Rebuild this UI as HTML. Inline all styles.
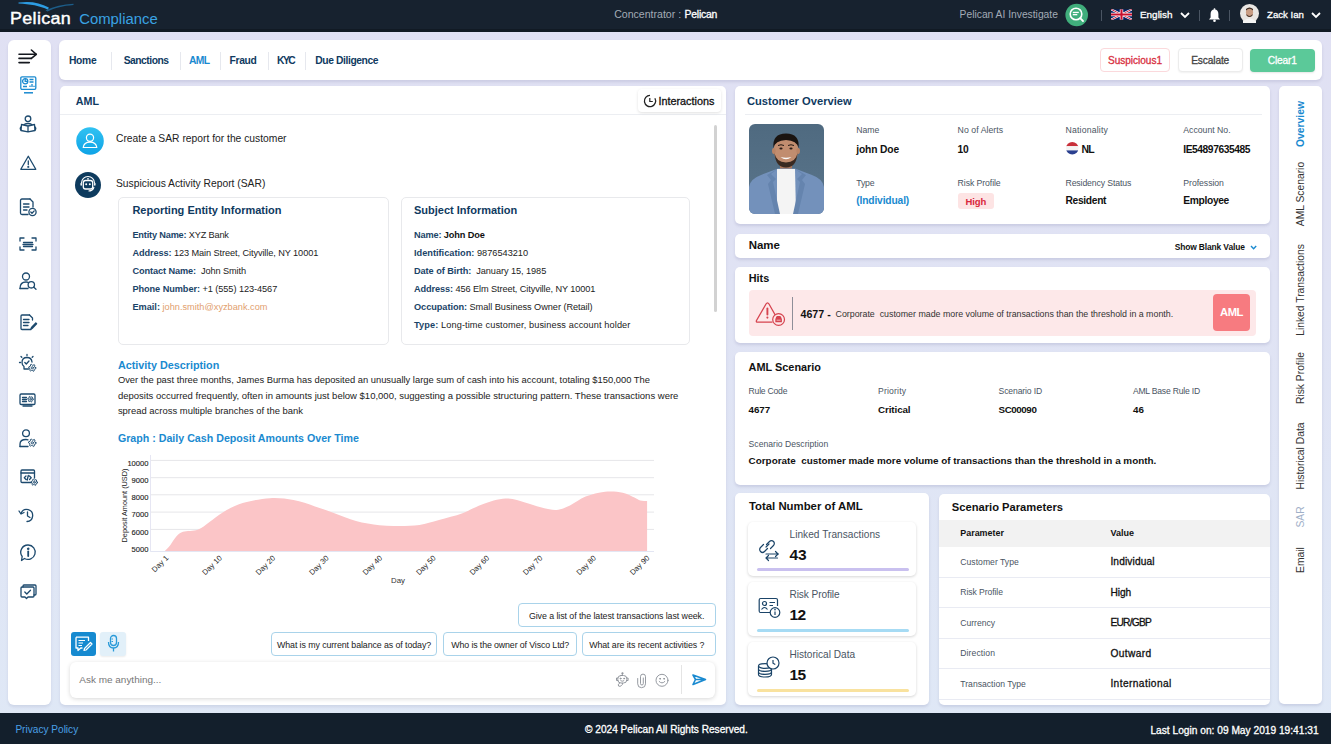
<!DOCTYPE html>
<html><head><meta charset="utf-8"><style>
html,body{margin:0;padding:0;}
body{width:1331px;height:744px;position:relative;overflow:hidden;font-family:"Liberation Sans", sans-serif;background:linear-gradient(180deg,#e0e0f3 0%,#e0e3f4 40%,#dfe8f6 100%);}
.t{position:absolute;line-height:1;white-space:nowrap;}
svg{position:absolute;overflow:visible;}
</style></head><body>
<div style="position:absolute;left:0px;top:0px;width:1331px;height:32px;background:#17222f;"></div>
<div style="position:absolute;left:0px;top:29px;width:1331px;height:3px;background:#111a24;"></div>
<svg style="left:0;top:0" width="100" height="32"><path d="M18.5 2.6 C 30 0.9, 40 2.6, 48.8 7.6 L48 9.8 C 40 5.9, 30 4.1, 18.5 3.6 Z" fill="#2d9de3"/><path d="M45.5 10.2 C 54 6.2, 63 4.3, 73.5 3.7 L73.5 5 C 63 5.9, 55 7.8, 47.5 11.4 Z" fill="#1c5c88"/></svg>
<div class="t" style="left:10px;top:10.76px;font-size:16px;color:#ffffff;font-weight:normal;letter-spacing:0.300px;-webkit-text-stroke:0.4px #fff;transform:scaleX(1.12);transform-origin:0 0;">Pelican</div>
<div class="t" style="left:79.2px;top:11.72px;font-size:14.86px;color:#3aa3e3;font-weight:normal;">Compliance</div>
<div class="t" style="left:614.2px;top:9.45px;font-size:10.57px;color:#a3abb6;font-weight:normal;">Concentrator :</div>
<div class="t" style="left:684.5px;top:9.60px;font-size:10.4px;color:#ffffff;font-weight:normal;-webkit-text-stroke:0.3px currentColor;letter-spacing:-0.199px;">Pelican</div>
<div class="t" style="left:959.6px;top:9.59px;font-size:10.29px;color:#a3abb6;font-weight:normal;">Pelican AI Investigate</div>
<svg style="left:1064px;top:2px" width="26" height="26"><circle cx="12.7" cy="13" r="11.3" fill="#40ae7c"/><circle cx="12" cy="12" r="5.8" fill="none" stroke="#fff" stroke-width="1.6"/><line x1="16.2" y1="16.2" x2="19" y2="19" stroke="#fff" stroke-width="1.8" stroke-linecap="round"/><rect x="8.8" y="9.8" width="6" height="1.3" fill="#fff"/><rect x="8.8" y="12" width="4.5" height="1.3" fill="#fff"/></svg>
<div style="position:absolute;left:1101px;top:10px;width:1px;height:11px;background:#4a5563;"></div>
<div style="position:absolute;left:1199px;top:10px;width:1px;height:11px;background:#4a5563;"></div>
<div style="position:absolute;left:1229px;top:10px;width:1px;height:11px;background:#4a5563;"></div>
<svg style="left:1111px;top:8.5px" width="21" height="11" viewBox="0 0 60 30"><clipPath id="uk"><rect width="60" height="30"/></clipPath><g clip-path="url(#uk)"><rect width="60" height="30" fill="#012169"/><path d="M0,0 L60,30 M60,0 L0,30" stroke="#fff" stroke-width="6"/><path d="M0,0 L60,30 M60,0 L0,30" stroke="#C8102E" stroke-width="2.5"/><path d="M30,0 V30 M0,15 H60" stroke="#fff" stroke-width="10"/><path d="M30,0 V30 M0,15 H60" stroke="#C8102E" stroke-width="6"/></g></svg>
<div class="t" style="left:1140px;top:10.21px;font-size:9.91px;color:#ffffff;font-weight:normal;-webkit-text-stroke:0.3px currentColor;">English</div>
<svg style="left:1180px;top:12px" width="10" height="7"><path d="M1 1 L5 5 L9 1" fill="none" stroke="#fff" stroke-width="1.8"/></svg>
<svg style="left:1208px;top:7.5px" width="13" height="15"><path d="M6.5 1.2 C3.8 1.2 2.6 3.5 2.6 6 L2.6 9.5 L1 11.5 L12 11.5 L10.4 9.5 L10.4 6 C10.4 3.5 9.2 1.2 6.5 1.2 Z" fill="#fff"/><circle cx="6.5" cy="12.8" r="1.3" fill="#fff"/><rect x="5.8" y="0.3" width="1.4" height="1.5" fill="#fff"/></svg>
<svg style="left:1240px;top:4px" width="20" height="20"><circle cx="9.5" cy="9.5" r="9.5" fill="#e9e6e3"/><ellipse cx="9.5" cy="8.2" rx="3.6" ry="4.4" fill="#c99d84"/><path d="M6 6.5 Q9.5 3 13 6.5 L13 5 Q9.5 2 6 5Z" fill="#3a2a22"/><path d="M6.5 10 Q9.5 14 12.5 10 L12.5 11.5 Q9.5 14.5 6.5 11.5Z" fill="#4a3428"/><path d="M3 17 Q9.5 12 16 17 L16 19 L3 19Z" fill="#f4f4f4"/></svg>
<div class="t" style="left:1267px;top:10.43px;font-size:9.65px;color:#ffffff;font-weight:normal;-webkit-text-stroke:0.3px currentColor;">Zack Ian</div>
<svg style="left:1311px;top:12px" width="10" height="7"><path d="M1 1 L5 5 L9 1" fill="none" stroke="#fff" stroke-width="1.8"/></svg>
<div style="position:absolute;left:8px;top:40px;width:43px;height:665px;background:#fff;border-radius:6px;box-shadow:0 2px 3px rgba(50,50,110,0.10);"></div>
<div style="position:absolute;left:59px;top:40px;width:1263px;height:40px;background:#fff;border-radius:6px;box-shadow:0 2px 3px rgba(50,50,110,0.12);"></div>
<div class="t" style="left:69px;top:55.68px;font-size:10.3px;color:#0f3a5f;font-weight:bold;letter-spacing:-0.327px;">Home</div>
<div class="t" style="left:123.7px;top:55.68px;font-size:10.3px;color:#0f3a5f;font-weight:bold;letter-spacing:-0.491px;">Sanctions</div>
<div class="t" style="left:189px;top:55.68px;font-size:10.3px;color:#1a8ad0;font-weight:bold;letter-spacing:-0.671px;">AML</div>
<div class="t" style="left:229.6px;top:55.68px;font-size:10.3px;color:#0f3a5f;font-weight:bold;letter-spacing:-0.382px;">Fraud</div>
<div class="t" style="left:277px;top:55.68px;font-size:10.3px;color:#0f3a5f;font-weight:bold;letter-spacing:-1.550px;">KYC</div>
<div class="t" style="left:315.2px;top:55.68px;font-size:10.3px;color:#0f3a5f;font-weight:bold;letter-spacing:-0.392px;">Due Diligence</div>
<div style="position:absolute;left:110.5px;top:52px;width:1px;height:18px;background:#e6e8ee;"></div>
<div style="position:absolute;left:179.5px;top:52px;width:1px;height:18px;background:#e6e8ee;"></div>
<div style="position:absolute;left:220px;top:52px;width:1px;height:18px;background:#e6e8ee;"></div>
<div style="position:absolute;left:267.5px;top:52px;width:1px;height:18px;background:#e6e8ee;"></div>
<div style="position:absolute;left:305.3px;top:52px;width:1px;height:18px;background:#e6e8ee;"></div>
<div style="position:absolute;left:1100px;top:48px;width:70px;height:24px;box-sizing:border-box;border:1px solid #fbd9dc;border-radius:4px;background:#fff;"></div>
<div class="t" style="left:1108px;top:55.87px;font-size:10.08px;color:#d8303f;font-weight:normal;-webkit-text-stroke:0.3px currentColor;letter-spacing:-0.033px;">Suspicious1</div>
<div style="position:absolute;left:1177.5px;top:48px;width:65px;height:24px;box-sizing:border-box;border:1px solid #ececec;border-radius:4px;background:#fff;box-shadow:0 1px 2px rgba(0,0,0,0.06);"></div>
<div class="t" style="left:1191.2px;top:55.77px;font-size:10.19px;color:#444;font-weight:normal;-webkit-text-stroke:0.3px currentColor;letter-spacing:-0.134px;">Escalate</div>
<div style="position:absolute;left:1250px;top:49px;width:65px;height:23px;border-radius:4px;background:#5bc999;box-shadow:0 1px 2px rgba(0,0,0,0.1);"></div>
<div class="t" style="left:1267.8px;top:55.77px;font-size:10.19px;color:#ffffff;font-weight:normal;-webkit-text-stroke:0.3px currentColor;letter-spacing:-0.168px;">Clear1</div>
<div style="position:absolute;left:0px;top:713px;width:1331px;height:31px;background:#131f2c;"></div>
<div class="t" style="left:15.4px;top:725.44px;font-size:10.11px;color:#4aa0e6;font-weight:normal;">Privacy Policy</div>
<div class="t" style="left:585px;top:725.42px;font-size:10.14px;color:#ffffff;font-weight:normal;-webkit-text-stroke:0.3px currentColor;">&copy; 2024 Pelican All Rights Reserved.</div>
<div class="t" style="left:1150.4px;top:725.57px;font-size:10.2px;color:#ffffff;font-weight:normal;-webkit-text-stroke:0.3px currentColor;">Last Login on: 09 May 2019 19:41:31</div>
<div style="position:absolute;left:60px;top:86px;width:666px;height:619px;background:#fff;border-radius:5px;box-shadow:0 2px 3px rgba(50,50,110,0.10);"></div>
<div class="t" style="left:75.8px;top:95.93px;font-size:10.71px;color:#0f3a5f;font-weight:bold;">AML</div>
<div style="position:absolute;left:60px;top:114px;width:666px;height:1px;background:#eceef2;"></div>
<div style="position:absolute;left:637.5px;top:88.5px;width:83.5px;height:23.5px;box-sizing:border-box;border-radius:4px;background:#fff;box-shadow:0 1px 3px rgba(0,0,0,0.12);"></div>
<svg style="left:642.5px;top:93.5px" width="14" height="14"><path d="M11.9 4.3 A5.6 5.6 0 1 1 7 1.4" fill="none" stroke="#222" stroke-width="1.3"/><path d="M6.8 4 V7.5 H9.8" fill="none" stroke="#222" stroke-width="1.2"/></svg>
<div class="t" style="left:658.4px;top:95.63px;font-size:10.83px;color:#111;font-weight:normal;-webkit-text-stroke:0.3px currentColor;">Interactions</div>
<div style="position:absolute;left:713.8px;top:125px;width:3.4px;height:187px;background:#d2d2d2;border-radius:2px;"></div>
<svg style="left:75.5px;top:127px" width="28" height="28"><defs><linearGradient id="g1" x1="0" y1="0" x2="0" y2="1"><stop offset="0" stop-color="#31c2f2"/><stop offset="1" stop-color="#0ea3e6"/></linearGradient></defs><circle cx="14" cy="14" r="13.8" fill="url(#g1)"/><circle cx="14" cy="10.8" r="3.6" fill="none" stroke="#fff" stroke-width="1.2"/><path d="M7.2 20.5 C7.8 16.2 10.5 15.2 14 15.2 C17.5 15.2 20.2 16.2 20.8 20.5 Z" fill="none" stroke="#fff" stroke-width="1.2" stroke-linejoin="round"/></svg>
<div class="t" style="left:116px;top:134.27px;font-size:10.31px;color:#222;font-weight:normal;">Create a SAR report for the customer</div>
<svg style="left:75px;top:172px" width="26" height="26"><circle cx="13" cy="13" r="13" fill="#0e3b5e"/><rect x="8.3" y="8.5" width="9.4" height="8.5" rx="2.2" fill="none" stroke="#fff" stroke-width="1.3"/><circle cx="11.2" cy="12.2" r="1" fill="#fff"/><circle cx="14.8" cy="12.2" r="1" fill="#fff"/><path d="M6.2 13 L6.2 11.5 M19.8 13 L19.8 11.5" stroke="#fff" stroke-width="1.5" stroke-linecap="round"/><path d="M6.5 11 A6.5 6.5 0 0 1 19.5 11" fill="none" stroke="#fff" stroke-width="1.1"/><path d="M19 15 Q18 19 13.5 19" fill="none" stroke="#fff" stroke-width="1.1"/><circle cx="13" cy="6.8" r="0.9" fill="#fff"/></svg>
<div class="t" style="left:116px;top:179.27px;font-size:10.31px;color:#222;font-weight:normal;">Suspicious Activity Report (SAR)</div>
<div style="position:absolute;left:117.5px;top:196.5px;width:271.5px;height:148px;box-sizing:border-box;border:1px solid #e8e9ec;border-radius:5px;background:#fff;"></div>
<div class="t" style="left:132.4px;top:205.49px;font-size:11.0px;color:#0f3a5f;font-weight:bold;">Reporting Entity Information</div>
<div class="t" style="left:132.4px;top:231.21px;font-size:9.2px;color:#222;font-weight:normal;letter-spacing:-0.176px;"><span style="color:#1b4468;font-weight:bold">Entity Name:</span><span style="color:#222;font-weight:normal"> XYZ Bank</span></div>
<div class="t" style="left:132.4px;top:249.41px;font-size:9.2px;color:#222;font-weight:normal;letter-spacing:-0.089px;"><span style="color:#1b4468;font-weight:bold">Address:</span><span style="color:#222;font-weight:normal"> 123 Main Street, Cityville, NY 10001</span></div>
<div class="t" style="left:132.4px;top:267.41px;font-size:9.2px;color:#222;font-weight:normal;letter-spacing:-0.093px;"><span style="color:#1b4468;font-weight:bold">Contact Name:</span><span style="color:#222;font-weight:normal">&nbsp; John Smith</span></div>
<div class="t" style="left:132.4px;top:285.21px;font-size:9.2px;color:#222;font-weight:normal;letter-spacing:-0.065px;"><span style="color:#1b4468;font-weight:bold">Phone Number:</span><span style="color:#222;font-weight:normal"> +1 (555) 123-4567</span></div>
<div class="t" style="left:132.4px;top:303.21px;font-size:9.2px;color:#222;font-weight:normal;letter-spacing:0.005px;"><span style="color:#1b4468;font-weight:bold">Email:</span><span style="color:#e2a06e;font-weight:normal"> john.smith@xyzbank.com</span></div>
<div style="position:absolute;left:401px;top:197px;width:289px;height:147.5px;box-sizing:border-box;border:1px solid #e8e9ec;border-radius:5px;background:#fff;"></div>
<div class="t" style="left:414px;top:205.49px;font-size:11.0px;color:#0f3a5f;font-weight:bold;">Subject Information</div>
<div class="t" style="left:414px;top:230.81px;font-size:9.2px;color:#222;font-weight:normal;letter-spacing:-0.130px;"><span style="color:#1b4468;font-weight:bold">Name:</span><span style="color:#111;font-weight:bold"> John Doe</span></div>
<div class="t" style="left:414px;top:249.21px;font-size:9.2px;color:#222;font-weight:normal;letter-spacing:0.008px;"><span style="color:#1b4468;font-weight:bold">Identification:</span><span style="color:#222;font-weight:normal"> 9876543210</span></div>
<div class="t" style="left:414px;top:267.21px;font-size:9.2px;color:#222;font-weight:normal;letter-spacing:-0.066px;"><span style="color:#1b4468;font-weight:bold">Date of Birth:</span><span style="color:#222;font-weight:normal">&nbsp; January 15, 1985</span></div>
<div class="t" style="left:414px;top:285.21px;font-size:9.2px;color:#222;font-weight:normal;letter-spacing:-0.100px;"><span style="color:#1b4468;font-weight:bold">Address:</span><span style="color:#222;font-weight:normal"> 456 Elm Street, Cityville, NY 10001</span></div>
<div class="t" style="left:414px;top:303.21px;font-size:9.2px;color:#222;font-weight:normal;letter-spacing:-0.052px;"><span style="color:#1b4468;font-weight:bold">Occupation:</span><span style="color:#222;font-weight:normal"> Small Business Owner (Retail)</span></div>
<div class="t" style="left:414px;top:321.11px;font-size:9.2px;color:#222;font-weight:normal;letter-spacing:0.107px;"><span style="color:#1b4468;font-weight:bold">Type:</span><span style="color:#222;font-weight:normal"> Long-time customer, business account holder</span></div>
<div class="t" style="left:117.9px;top:359.75px;font-size:10.81px;color:#1a8ad0;font-weight:bold;">Activity Description</div>
<div class="t" style="left:117.9px;top:376.27px;font-size:9.37px;color:#222;font-weight:normal;">Over the past three months, James Burma has deposited an unusually large sum of cash into his account, totaling $150,000 The</div>
<div class="t" style="left:117.9px;top:391.26px;font-size:9.5px;color:#222;font-weight:normal;">deposits occurred frequently, often in amounts just below $10,000, suggesting a possible structuring pattern. These transactions were</div>
<div class="t" style="left:117.9px;top:406.00px;font-size:9.45px;color:#222;font-weight:normal;">spread across multiple branches of the bank</div>
<div class="t" style="left:117.9px;top:432.67px;font-size:10.67px;color:#1a8ad0;font-weight:bold;">Graph : Daily Cash Deposit Amounts Over Time</div>
<svg style="left:0;top:0" width="1331" height="744" font-family="Liberation Sans, sans-serif">
<line x1="151" y1="460.4" x2="654" y2="460.4" stroke="#e6e6e9" stroke-width="1"/><line x1="151" y1="477.7" x2="654" y2="477.7" stroke="#e6e6e9" stroke-width="1"/><line x1="151" y1="494.8" x2="654" y2="494.8" stroke="#e6e6e9" stroke-width="1"/><line x1="151" y1="512.1" x2="654" y2="512.1" stroke="#e6e6e9" stroke-width="1"/><line x1="151" y1="529.4" x2="654" y2="529.4" stroke="#e6e6e9" stroke-width="1"/>
<path d="M164.5,551.3 C165.5,550.2 168.4,547.5 170.4,545 C172.4,542.5 174.2,538.8 176.3,536.6 C178.4,534.4 179.4,532.9 183,531.8 C186.6,530.7 193.3,531.4 197.7,529.8 C202.1,528.2 205.3,524.9 209.5,522 C213.7,519.1 217.6,515.4 223.1,512.2 C228.6,509.0 234.9,505.3 242.7,503 C250.5,500.7 261.5,498.7 270,498.2 C278.5,497.7 286.0,498.7 293.5,500.1 C301.0,501.5 308.2,504.2 315,506.4 C321.8,508.6 327.7,510.8 334.5,513.2 C341.3,515.6 348.5,519.0 356,521 C363.5,523.0 372.1,524.5 379.4,525.3 C386.7,526.1 393.3,526.0 400,525.9 C406.7,525.8 413.0,525.9 419.5,524.9 C426.0,523.9 431.8,522.0 439,520 C446.2,518.0 455.3,515.8 462.5,513.2 C469.7,510.6 474.8,506.8 482,504.4 C489.2,502.0 498.3,498.9 505.5,498.6 C512.7,498.3 519.1,501.1 525,502.5 C530.9,503.9 535.5,506.1 540.7,507.3 C545.9,508.5 551.4,510.2 556.3,509.9 C561.2,509.6 565.1,507.6 570,505.4 C574.9,503.2 579.8,498.9 585.6,496.6 C591.5,494.3 598.9,492.4 605.1,491.7 C611.3,491.0 617.8,491.7 622.7,492.7 C627.6,493.7 631.5,496.3 634.4,497.6 C637.3,498.9 638.2,499.9 640.3,500.5 C642.4,501.1 646.0,501.0 647.1,501.1 L647.1,551.3 L164.5,551.3 Z" fill="#fbc5c7"/>
<line x1="150.5" y1="455" x2="150.5" y2="551.8" stroke="#e6e6f3" stroke-width="1"/>
<line x1="150.5" y1="551.5" x2="654" y2="551.5" stroke="#e3e6f3" stroke-width="1"/>
<text x="148.5" y="465.59999999999997" text-anchor="end" font-size="7.6" fill="#222" stroke="#222" stroke-width="0.12">10000</text><text x="148.5" y="482.9" text-anchor="end" font-size="7.6" fill="#222" stroke="#222" stroke-width="0.12">9000</text><text x="148.5" y="500.0" text-anchor="end" font-size="7.6" fill="#222" stroke="#222" stroke-width="0.12">8000</text><text x="148.5" y="517.3000000000001" text-anchor="end" font-size="7.6" fill="#222" stroke="#222" stroke-width="0.12">7000</text><text x="148.5" y="534.6" text-anchor="end" font-size="7.6" fill="#222" stroke="#222" stroke-width="0.12">6000</text><text x="148.5" y="551.9000000000001" text-anchor="end" font-size="7.6" fill="#222" stroke="#222" stroke-width="0.12">5000</text>
<text x="0" y="0" font-size="7.3" fill="#222" text-anchor="middle" transform="translate(127.4 505.5) rotate(-90)">Deposit Amount (USD)</text>
<text x="168.9" y="558.6" text-anchor="end" font-size="7.6" fill="#222" transform="rotate(-45 168.9 558.6)">Day 1</text><text x="222.4" y="558.6" text-anchor="end" font-size="7.6" fill="#222" transform="rotate(-45 222.4 558.6)">Day 10</text><text x="275.8" y="558.6" text-anchor="end" font-size="7.6" fill="#222" transform="rotate(-45 275.8 558.6)">Day 20</text><text x="329.3" y="558.6" text-anchor="end" font-size="7.6" fill="#222" transform="rotate(-45 329.3 558.6)">Day 30</text><text x="382.7" y="558.6" text-anchor="end" font-size="7.6" fill="#222" transform="rotate(-45 382.7 558.6)">Day 40</text><text x="436.2" y="558.6" text-anchor="end" font-size="7.6" fill="#222" transform="rotate(-45 436.2 558.6)">Day 50</text><text x="489.7" y="558.6" text-anchor="end" font-size="7.6" fill="#222" transform="rotate(-45 489.7 558.6)">Day 60</text><text x="543.1" y="558.6" text-anchor="end" font-size="7.6" fill="#222" transform="rotate(-45 543.1 558.6)">Day 70</text><text x="596.6" y="558.6" text-anchor="end" font-size="7.6" fill="#222" transform="rotate(-45 596.6 558.6)">Day 80</text><text x="650.0" y="558.6" text-anchor="end" font-size="7.6" fill="#222" transform="rotate(-45 650.0 558.6)">Day 90</text>
<text x="398" y="583" font-size="7.8" fill="#333" text-anchor="middle">Day</text>
</svg>
<div style="position:absolute;left:518.4px;top:603.4px;width:197.2px;height:24px;box-sizing:border-box;border:1px solid #a9d3ea;border-radius:4px;background:#fff;"></div>
<div class="t" style="left:528.9px;top:611.83px;font-size:8.83px;color:#222;font-weight:normal;letter-spacing:-0.065px;">Give a list of the latest transactions last week.</div>
<div style="position:absolute;left:271.2px;top:632.2px;width:166.2px;height:23.5px;box-sizing:border-box;border:1px solid #a9d3ea;border-radius:4px;background:#fff;"></div>
<div class="t" style="left:277px;top:640.63px;font-size:8.83px;color:#222;font-weight:normal;letter-spacing:-0.089px;">What is my current balance as of today?</div>
<div style="position:absolute;left:442.6px;top:632.2px;width:134.7px;height:23.5px;box-sizing:border-box;border:1px solid #a9d3ea;border-radius:4px;background:#fff;"></div>
<div class="t" style="left:451.3px;top:640.63px;font-size:8.83px;color:#222;font-weight:normal;letter-spacing:-0.127px;">Who is the owner of Visco Ltd?</div>
<div style="position:absolute;left:581.6px;top:632.2px;width:134px;height:23.5px;box-sizing:border-box;border:1px solid #a9d3ea;border-radius:4px;background:#fff;"></div>
<div class="t" style="left:589.2px;top:640.63px;font-size:8.83px;color:#222;font-weight:normal;letter-spacing:-0.082px;">What are its recent activities ?</div>
<div style="position:absolute;left:70.6px;top:631.7px;width:25.5px;height:24px;background:#168ad0;border-radius:3px;"></div>
<svg style="left:74px;top:635px" width="19" height="17"><path d="M2 2.2 H14.5 V6 M2 2.2 V13 H4 V15.5 L6.8 13 H8.5" fill="none" stroke="#fff" stroke-width="1.3" stroke-linejoin="round"/><path d="M4.5 5.5 H11 M4.5 8 H9 M4.5 10.5 H8" stroke="#fff" stroke-width="1.2"/><path d="M10.5 13.5 L16.5 7.5 L18 9 L12 15 L10 15.5 Z" fill="none" stroke="#fff" stroke-width="1.2" stroke-linejoin="round"/></svg>
<div style="position:absolute;left:100.4px;top:631.7px;width:26px;height:24px;background:#e2f0f9;border-radius:3px;box-shadow:0 1px 2px rgba(0,0,0,0.08);"></div>
<svg style="left:106px;top:634px" width="15" height="19"><rect x="4.5" y="1.5" width="6" height="10" rx="3" fill="none" stroke="#2a9ad8" stroke-width="1.3"/><path d="M2.5 8 Q2.5 14 7.5 14 Q12.5 14 12.5 8" fill="none" stroke="#2a9ad8" stroke-width="1.3"/><path d="M7.5 14 V17.5" stroke="#2a9ad8" stroke-width="1.3"/><path d="M5.5 5 H7 M5.5 7.5 H7" stroke="#2a9ad8" stroke-width="1"/></svg>
<div style="position:absolute;left:70.2px;top:661.8px;width:645px;height:36.5px;background:#fff;border-radius:6px;box-shadow:0 1px 4px rgba(0,0,0,0.16);"></div>
<div class="t" style="left:79.3px;top:675.26px;font-size:9.97px;color:#777;font-weight:normal;">Ask me anything...</div>
<div style="position:absolute;left:680.5px;top:665px;width:1px;height:29px;background:#e4e4e4;"></div>
<svg style="left:615px;top:671px" width="56" height="18"><g fill="none" stroke="#8a8f96" stroke-width="0.9" stroke-linecap="round"><rect x="2.8" y="4.5" width="9" height="7.5" rx="3.2"/><path d="M2.8 7 H1.5 V9.5 H2.8 M11.8 7 H13.1 V9.5 H11.8"/><path d="M7.3 4.5 V2.8"/><circle cx="7.3" cy="2.2" r="0.6"/><circle cx="5.5" cy="7.6" r="0.5"/><circle cx="9.1" cy="7.6" r="0.5"/><path d="M5.8 9.8 Q7.3 10.8 8.8 9.8"/><path d="M4.5 12.3 Q2.5 13 3.5 15 Q5 16 6.5 14.5 Q8 13.5 7.5 12.3"/><path d="M28.3 7 V12.6 A1.4 1.4 0 0 1 25.5 12.6 V5.6 A2.5 2.5 0 0 1 30.5 5.6 V12.8 A3.9 3.9 0 0 1 22.7 12.8 V7.5"/><circle cx="47" cy="9.3" r="6"/><path d="M44.2 10.5 Q47 13.5 49.8 10.5"/><circle cx="45" cy="7.8" r="0.45"/><circle cx="49" cy="7.8" r="0.45"/></g></svg>
<svg style="left:692px;top:674px" width="15" height="12"><path d="M1 1 L13.5 5.5 L1 10.5 L3.5 5.5 Z M3.5 5.5 H13" fill="none" stroke="#1a8ad0" stroke-width="1.6" stroke-linejoin="round"/></svg>
<div style="position:absolute;left:735px;top:86.3px;width:535px;height:138px;background:#fff;border-radius:5px;box-shadow:0 2px 3px rgba(50,50,110,0.13);"></div>
<div class="t" style="left:746.9px;top:95.75px;font-size:11.16px;color:#0f3a5f;font-weight:bold;">Customer Overview</div>
<div style="position:absolute;left:744.5px;top:114px;width:517px;height:1px;background:#eceef2;"></div>
<svg style="left:749.2px;top:124.4px" width="75" height="90"><defs><clipPath id="ph"><rect width="75" height="90" rx="6"/></clipPath>
<linearGradient id="bg" x1="0" y1="0" x2="0" y2="1"><stop offset="0" stop-color="#4f6a80"/><stop offset="1" stop-color="#5a758b"/></linearGradient></defs>
<g clip-path="url(#ph)">
<rect width="75" height="90" fill="url(#bg)"/>
<rect x="31" y="34" width="12" height="16" fill="#a9765b"/>
<path d="M0 90 L0 63 Q1 55 12 51 L29 44.5 L46 44.5 L63 51 Q74 55 75 63 L75 90 Z" fill="#7391bb"/>
<path d="M28 45 L46 45 L47 90 L28 90 Z" fill="#f4f4f4"/>
<path d="M29 44.5 L22 50 L27 55 L24 58 L31 90 L26 90 L19 60 L22 56 L18 51 Z" fill="#6584ae"/>
<path d="M45.5 44.5 L53 50 L48 55 L51 58 L44 90 L49 90 L56 60 L53 56 L57 51 Z" fill="#6584ae"/>
<ellipse cx="37" cy="26" rx="12.2" ry="15" fill="#c18d6f"/>
<ellipse cx="24.8" cy="27" rx="1.8" ry="3" fill="#b98466"/><ellipse cx="49.2" cy="27" rx="1.8" ry="3" fill="#b98466"/>
<path d="M24.5 24 Q23 9.5 37 9.5 Q51 9.5 49.5 24 Q48 16.5 37 16 Q26 16.5 24.5 24 Z" fill="#1a1411"/>
<path d="M25.5 29 Q26.5 43.5 37 43.5 Q47.5 43.5 48.5 29 Q47 38 37 38.5 Q27 38 25.5 29 Z" fill="#3a2a21"/>
<path d="M31.5 33 Q37 37.5 42.5 33 Q37 34.5 31.5 33 Z" fill="#fafafa"/>
<ellipse cx="32" cy="24.5" rx="1.6" ry="0.9" fill="#2a1d17"/><ellipse cx="42" cy="24.5" rx="1.6" ry="0.9" fill="#2a1d17"/>
<path d="M29 21.5 Q32 20 35 21.5 M39 21.5 Q42 20 45 21.5" stroke="#241a15" stroke-width="1" fill="none"/>
</g></svg>
<div class="t" style="left:856.2px;top:126.24px;font-size:8.7px;color:#4a5563;font-weight:normal;letter-spacing:-0.047px;">Name</div>
<div class="t" style="left:856.2px;top:145.21px;font-size:10.26px;color:#111;font-weight:bold;letter-spacing:-0.135px;">john Doe</div>
<div class="t" style="left:957.6px;top:126.24px;font-size:8.7px;color:#4a5563;font-weight:normal;letter-spacing:0.058px;">No of Alerts</div>
<div class="t" style="left:957.6px;top:145.21px;font-size:10.26px;color:#111;font-weight:bold;letter-spacing:-0.407px;">10</div>
<div class="t" style="left:1065.5px;top:126.24px;font-size:8.7px;color:#4a5563;font-weight:normal;letter-spacing:0.185px;">Nationality</div>
<svg style="left:1065.5px;top:142.2px" width="13" height="13"><clipPath id="nl"><circle cx="6.25" cy="6.25" r="6.2"/></clipPath><g clip-path="url(#nl)"><rect width="13" height="4.2" fill="#c8303a"/><rect y="4.2" width="13" height="4.2" fill="#f4f4f4"/><rect y="8.4" width="13" height="4.6" fill="#2a3f8f"/></g></svg>
<div class="t" style="left:1081.6px;top:145.03px;font-size:10.48px;color:#111;font-weight:bold;letter-spacing:-0.787px;">NL</div>
<div class="t" style="left:1183.3px;top:126.24px;font-size:8.7px;color:#4a5563;font-weight:normal;letter-spacing:-0.003px;">Account No.</div>
<div class="t" style="left:1183.3px;top:145.21px;font-size:10.26px;color:#111;font-weight:bold;letter-spacing:-0.442px;">IE54897635485</div>
<div class="t" style="left:856.2px;top:178.54px;font-size:8.7px;color:#4a5563;font-weight:normal;letter-spacing:-0.136px;">Type</div>
<div class="t" style="left:856.2px;top:196.41px;font-size:10.26px;color:#1a8ad0;font-weight:bold;letter-spacing:-0.143px;">(Individual)</div>
<div class="t" style="left:957.6px;top:178.54px;font-size:8.7px;color:#4a5563;font-weight:normal;letter-spacing:-0.078px;">Risk Profile</div>
<div style="position:absolute;left:957.6px;top:193.4px;width:36.5px;height:15.5px;background:#fde4e4;border-radius:3px;"></div>
<div class="t" style="left:965.5px;top:197.06px;font-size:9.5px;color:#d9273b;font-weight:bold;letter-spacing:-0.080px;">High</div>
<div class="t" style="left:1065.5px;top:178.54px;font-size:8.7px;color:#4a5563;font-weight:normal;letter-spacing:-0.119px;">Residency Status</div>
<div class="t" style="left:1065.5px;top:196.41px;font-size:10.26px;color:#111;font-weight:bold;letter-spacing:-0.329px;">Resident</div>
<div class="t" style="left:1183.3px;top:178.54px;font-size:8.7px;color:#4a5563;font-weight:normal;letter-spacing:-0.045px;">Profession</div>
<div class="t" style="left:1183.3px;top:196.41px;font-size:10.26px;color:#111;font-weight:bold;letter-spacing:-0.346px;">Employee</div>
<div style="position:absolute;left:735px;top:234px;width:535px;height:24.4px;background:#fff;border-radius:5px;box-shadow:0 2px 3px rgba(50,50,110,0.13);"></div>
<div class="t" style="left:748.7px;top:239.57px;font-size:11.49px;color:#111;font-weight:bold;">Name</div>
<div class="t" style="left:1174.7px;top:243.15px;font-size:8.45px;color:#111;font-weight:bold;letter-spacing:-0.135px;">Show Blank Value</div>
<svg style="left:1249.5px;top:244.5px" width="8" height="6"><path d="M1 1 L3.6 3.8 L6.2 1" fill="none" stroke="#1a8ad0" stroke-width="1.4"/></svg>
<div style="position:absolute;left:735px;top:267.4px;width:535px;height:76px;background:#fff;border-radius:5px;box-shadow:0 2px 3px rgba(50,50,110,0.13);"></div>
<div class="t" style="left:748.7px;top:273.32px;font-size:10.85px;color:#111;font-weight:bold;letter-spacing:0.000px;">Hits</div>
<div style="position:absolute;left:749.2px;top:290.4px;width:506.5px;height:45.5px;background:#fde8e9;border-radius:4px;"></div>
<svg style="left:755px;top:300px" width="32" height="26"><path d="M20.5 15.5 L14 4 Q12.5 1.6 11 4 L1.5 20.5 Q0.8 22.2 2.7 22.2 L17.5 22.2" fill="none" stroke="#d6434f" stroke-width="1.3" stroke-linejoin="round"/><path d="M12.4 8.5 V14.5" stroke="#d6434f" stroke-width="1.9" stroke-linecap="round"/><circle cx="12.4" cy="17.6" r="1.05" fill="#d6434f"/><circle cx="23.6" cy="19.5" r="5.9" fill="#fde8e9" stroke="#d6434f" stroke-width="1.2"/><path d="M20.3 19.2 L21.2 16.8 Q21.5 16 22.4 16 H24.8 Q25.7 16 26 16.8 L26.9 19.2 V22.2 H20.3 Z" fill="#d6434f"/><path d="M21.6 20.2 H25.6" stroke="#fde8e9" stroke-width="0.7"/></svg>
<div style="position:absolute;left:792px;top:297px;width:1px;height:33px;background:#8e8e98;"></div>
<div class="t" style="left:800.5px;top:308.88px;font-size:10.66px;color:#111;font-weight:bold;">4677 -</div>
<div class="t" style="left:835.5px;top:309.93px;font-size:8.83px;color:#333;font-weight:normal;">Corporate&nbsp; customer made more volume of transactions than the threshold in a month.</div>
<div style="position:absolute;left:1212.7px;top:294.4px;width:37.8px;height:37px;background:#f77b80;border-radius:4px;"></div>
<div class="t" style="left:1220px;top:307.08px;font-size:11.25px;color:#ffffff;font-weight:bold;letter-spacing:-0.457px;">AML</div>
<div style="position:absolute;left:735px;top:352.4px;width:535px;height:133px;background:#fff;border-radius:5px;box-shadow:0 2px 3px rgba(50,50,110,0.13);"></div>
<div class="t" style="left:748.6px;top:361.97px;font-size:10.9px;color:#111;font-weight:bold;">AML Scenario</div>
<div class="t" style="left:748.6px;top:387.32px;font-size:8.6px;color:#4a5563;font-weight:normal;letter-spacing:-0.223px;">Rule Code</div>
<div class="t" style="left:748.6px;top:405.30px;font-size:9.8px;color:#111;font-weight:bold;letter-spacing:-0.074px;">4677</div>
<div class="t" style="left:878px;top:387.32px;font-size:8.6px;color:#4a5563;font-weight:normal;letter-spacing:0.181px;">Priority</div>
<div class="t" style="left:878px;top:405.30px;font-size:9.8px;color:#111;font-weight:bold;letter-spacing:-0.090px;">Critical</div>
<div class="t" style="left:998.6px;top:387.32px;font-size:8.6px;color:#4a5563;font-weight:normal;letter-spacing:-0.137px;">Scenario ID</div>
<div class="t" style="left:998.6px;top:405.30px;font-size:9.8px;color:#111;font-weight:bold;letter-spacing:-0.437px;">SC00090</div>
<div class="t" style="left:1132.9px;top:387.32px;font-size:8.6px;color:#4a5563;font-weight:normal;letter-spacing:-0.211px;">AML Base Rule ID</div>
<div class="t" style="left:1132.9px;top:405.30px;font-size:9.8px;color:#111;font-weight:bold;letter-spacing:0.047px;">46</div>
<div class="t" style="left:748.6px;top:439.52px;font-size:8.6px;color:#4a5563;font-weight:normal;letter-spacing:0.015px;">Scenario Description</div>
<div class="t" style="left:748.6px;top:456.43px;font-size:9.89px;color:#111;font-weight:bold;letter-spacing:0.000px;">Corporate&nbsp; customer made more volume of transactions than the threshold in a month.</div>
<div style="position:absolute;left:734.6px;top:492.6px;width:194.4px;height:212.8px;background:#fff;border-radius:5px;box-shadow:0 2px 3px rgba(50,50,110,0.13);"></div>
<div class="t" style="left:748.9px;top:501.36px;font-size:11.39px;color:#111;font-weight:bold;">Total Number of AML</div>
<div style="position:absolute;left:747.7px;top:521.6px;width:168.5px;height:54px;background:#fff;border-radius:5px;box-shadow:0 1px 3px rgba(0,0,0,0.17);"></div>
<div class="t" style="left:789.5px;top:529.85px;font-size:10.1px;color:#4a5563;font-weight:normal;letter-spacing:0.048px;">Linked Transactions</div>
<div class="t" style="left:789.5px;top:546.66px;font-size:15.52px;color:#111;font-weight:bold;letter-spacing:-0.231px;">43</div>
<div style="position:absolute;left:756.9px;top:568.1px;width:151.7px;height:3.2px;background:#c9c0ef;border-radius:2px;"></div>
<div style="position:absolute;left:747.7px;top:582px;width:168.5px;height:54px;background:#fff;border-radius:5px;box-shadow:0 1px 3px rgba(0,0,0,0.17);"></div>
<div class="t" style="left:789.5px;top:590.25px;font-size:10.1px;color:#4a5563;font-weight:normal;letter-spacing:-0.087px;">Risk Profile</div>
<div class="t" style="left:789.5px;top:607.06px;font-size:15.52px;color:#111;font-weight:bold;letter-spacing:-0.681px;">12</div>
<div style="position:absolute;left:756.9px;top:628.5px;width:151.7px;height:3.2px;background:#a6dbf4;border-radius:2px;"></div>
<div style="position:absolute;left:747.7px;top:642.2px;width:168.5px;height:54px;background:#fff;border-radius:5px;box-shadow:0 1px 3px rgba(0,0,0,0.17);"></div>
<div class="t" style="left:789.5px;top:650.45px;font-size:10.1px;color:#4a5563;font-weight:normal;letter-spacing:-0.003px;">Historical Data</div>
<div class="t" style="left:789.5px;top:667.26px;font-size:15.52px;color:#111;font-weight:bold;letter-spacing:-0.681px;">15</div>
<div style="position:absolute;left:756.9px;top:688.7px;width:151.7px;height:3.2px;background:#f9e29e;border-radius:2px;"></div>
<svg style="left:757px;top:535px" width="24" height="28"><g fill="none" stroke="#1b4468" stroke-width="1.2" stroke-linecap="round"><path d="M9.5 9.5 L12.5 6.5 A2.8 2.8 0 0 1 16.5 10.5 L13.5 13.5"/><path d="M10.5 13.5 L7.5 16.5 A2.8 2.8 0 0 1 3.5 12.5 L6.5 9.5"/><path d="M9 12 L12 9"/><path d="M9 19 H21 M18.5 16.5 L21 19 M9 23 H20.5 M11.5 20.5 L9 23 L11.5 25.5"/><path d="M18.5 21.5 L21 19"/></g></svg>
<svg style="left:758px;top:597px" width="24" height="24"><g fill="none" stroke="#1b4468" stroke-width="1.2"><path d="M15 15.5 H2.5 Q1.2 15.5 1.2 14 V3 Q1.2 1.5 2.5 1.5 H18 Q19.5 1.5 19.5 3 V9"/><circle cx="6.5" cy="6.5" r="2"/><path d="M3.5 12.5 Q6.5 8.5 9.5 12.5"/><path d="M11.5 5.5 H17 M11.5 8.5 H15"/><circle cx="17" cy="15.5" r="4.8" fill="#fff"/><path d="M17 14.5 V18"/><circle cx="17" cy="12.6" r="0.3" fill="#1b4468"/></g></svg>
<svg style="left:756px;top:655px" width="26" height="26"><g fill="none" stroke="#1b4468" stroke-width="1.2"><ellipse cx="9" cy="11" rx="6.5" ry="2.3"/><path d="M2.5 11 V19.5 Q2.5 22 9 22 Q15.5 22 15.5 19.5 V11"/><path d="M2.5 14 Q2.5 16.3 9 16.3 Q15.5 16.3 15.5 14 M2.5 17 Q2.5 19.3 9 19.3 Q15.5 19.3 15.5 17"/><circle cx="17" cy="8" r="6" fill="#fff"/><path d="M17 5 V8.2 L19.3 9.5"/></g></svg>
<div style="position:absolute;left:938.7px;top:494.2px;width:331.3px;height:211px;background:#fff;border-radius:5px;box-shadow:0 2px 3px rgba(50,50,110,0.13);overflow:hidden;"></div>
<div class="t" style="left:951.8px;top:501.54px;font-size:11.18px;color:#111;font-weight:bold;">Scenario Parameters</div>
<div style="position:absolute;left:938.7px;top:520px;width:331.3px;height:27px;background:#f2f2f2;"></div>
<div class="t" style="left:960.3px;top:529.36px;font-size:8.91px;color:#111;font-weight:bold;">Parameter</div>
<div class="t" style="left:1110.4px;top:529.28px;font-size:9.0px;color:#111;font-weight:bold;">Value</div>
<div class="t" style="left:960.3px;top:557.62px;font-size:8.6px;color:#4a5563;font-weight:normal;letter-spacing:0.029px;">Customer Type</div>
<div class="t" style="left:1110.4px;top:557.07px;font-size:10.2px;color:#111;font-weight:normal;-webkit-text-stroke:0.3px currentColor;letter-spacing:0.125px;">Individual</div>
<div style="position:absolute;left:938.7px;top:576.5px;width:331.3px;height:1px;background:#e9ebf3;"></div>
<div class="t" style="left:960.3px;top:588.12px;font-size:8.6px;color:#4a5563;font-weight:normal;letter-spacing:-0.072px;">Risk Profile</div>
<div class="t" style="left:1110.4px;top:587.57px;font-size:10.2px;color:#111;font-weight:normal;-webkit-text-stroke:0.3px currentColor;letter-spacing:-0.063px;">High</div>
<div style="position:absolute;left:938.7px;top:607.0px;width:331.3px;height:1px;background:#e9ebf3;"></div>
<div class="t" style="left:960.3px;top:618.62px;font-size:8.6px;color:#4a5563;font-weight:normal;letter-spacing:-0.009px;">Currency</div>
<div class="t" style="left:1110.4px;top:618.07px;font-size:10.2px;color:#111;font-weight:normal;-webkit-text-stroke:0.3px currentColor;letter-spacing:-0.751px;">EUR/GBP</div>
<div style="position:absolute;left:938.7px;top:637.5px;width:331.3px;height:1px;background:#e9ebf3;"></div>
<div class="t" style="left:960.3px;top:649.12px;font-size:8.6px;color:#4a5563;font-weight:normal;letter-spacing:0.098px;">Direction</div>
<div class="t" style="left:1110.4px;top:648.57px;font-size:10.2px;color:#111;font-weight:normal;-webkit-text-stroke:0.3px currentColor;letter-spacing:0.383px;">Outward</div>
<div style="position:absolute;left:938.7px;top:668.0px;width:331.3px;height:1px;background:#e9ebf3;"></div>
<div class="t" style="left:960.3px;top:679.62px;font-size:8.6px;color:#4a5563;font-weight:normal;letter-spacing:0.009px;">Transaction Type</div>
<div class="t" style="left:1110.4px;top:679.07px;font-size:10.2px;color:#111;font-weight:normal;-webkit-text-stroke:0.3px currentColor;letter-spacing:0.402px;">International</div>
<div style="position:absolute;left:938.7px;top:698.5px;width:331.3px;height:1px;background:#e9ebf3;"></div>
<div style="position:absolute;left:1279px;top:86.3px;width:42.7px;height:617.5px;background:#fff;border-radius:5px;box-shadow:0 2px 3px rgba(50,50,110,0.13);"></div>
<div class="t" style="left:1241.2px;top:118.3px;width:120px;height:12px;line-height:12px;text-align:center;font-size:10.3px;color:#1a8ad0;font-weight:bold;transform:rotate(-90deg);">Overview</div>
<div class="t" style="left:1241.2px;top:188.39999999999998px;width:120px;height:12px;line-height:12px;text-align:center;font-size:10.3px;color:#333;font-weight:normal;transform:rotate(-90deg);">AML Scenario</div>
<div class="t" style="left:1241.2px;top:284.3px;width:120px;height:12px;line-height:12px;text-align:center;font-size:10.3px;color:#333;font-weight:normal;transform:rotate(-90deg);">Linked Transactions</div>
<div class="t" style="left:1241.2px;top:371.75px;width:120px;height:12px;line-height:12px;text-align:center;font-size:10.3px;color:#333;font-weight:normal;transform:rotate(-90deg);">Risk Profile</div>
<div class="t" style="left:1241.2px;top:449.85px;width:120px;height:12px;line-height:12px;text-align:center;font-size:10.3px;color:#333;font-weight:normal;transform:rotate(-90deg);">Historical Data</div>
<div class="t" style="left:1241.2px;top:511.25px;width:120px;height:12px;line-height:12px;text-align:center;font-size:10.3px;color:#9fb0c8;font-weight:normal;transform:rotate(-90deg);">SAR</div>
<div class="t" style="left:1241.2px;top:553.5999999999999px;width:120px;height:12px;line-height:12px;text-align:center;font-size:10.3px;color:#333;font-weight:normal;transform:rotate(-90deg);">Email</div>
<svg style="left:0;top:0" width="50" height="70"><g fill="none" stroke="#15181f" stroke-width="1.6" stroke-linecap="round" stroke-linejoin="round"><path d="M19 54.3 H36.2 M19 58.4 H31.2 M19 62.6 H29.3"/><path d="M31.4 50 L36.3 54.3 L31.4 58.4"/></g></svg>
<svg style="left:20px;top:75.5px" width="17" height="18"><g fill="none" stroke="#1a8ad0" stroke-width="1.3"><rect x="0.8" y="0.8" width="15" height="12.5" rx="1.2"/><circle cx="5.2" cy="5.3" r="2.6"/><path d="M5.2 2.7 V5.3 H7.8"/><path d="M9.5 3.5 H13.5 M9.5 6 H13.5 M3 10.5 H7"/><path d="M10 11 V9.5 M12 11 V8 M14 11 V9.8"/><path d="M4 16.8 H13" stroke-width="1.5"/></g></svg>
<svg style="left:19px;top:114.5px" width="18" height="18"><g fill="none" stroke="#1d4a6e" stroke-width="1.3" stroke-linecap="round" stroke-linejoin="round"><circle cx="9" cy="3.8" r="2.8"/><path d="M5 9.5 Q9 7.5 13 9.5"/><path d="M9 11 V16.5 M2.5 9.5 L9 11 L15.5 9.5 L16 15.5 L9 16.8 L2 15.5 Z"/><path d="M2 12 Q0.5 13.5 2 15 M16 12 Q17.5 13.5 16 15"/></g></svg>
<svg style="left:19.5px;top:155px" width="17" height="16"><g fill="none" stroke="#1d4a6e" stroke-width="1.3" stroke-linecap="round" stroke-linejoin="round"><path d="M8.3 1.2 L15.8 14.3 H0.8 Z"/><path d="M8.3 6 V9.5"/><circle cx="8.3" cy="11.9" r="0.4"/></g></svg>
<svg style="left:18.5px;top:198px" width="19" height="19"><g fill="none" stroke="#1d4a6e" stroke-width="1.3" stroke-linecap="round" stroke-linejoin="round"><path d="M11 1 H3 Q1.5 1 1.5 2.5 V15 Q1.5 16.5 3 16.5 H9"/><path d="M11 1 L14 4 V9"/><path d="M4.5 6 H10 M4.5 9 H10 M4.5 12 H8"/><circle cx="13.5" cy="14" r="3.6"/><path d="M11.8 14 L13 15.2 L15.2 12.9"/></g></svg>
<svg style="left:18.5px;top:236.5px" width="18" height="15"><g fill="none" stroke="#1d4a6e" stroke-width="1.3" stroke-linecap="round" stroke-linejoin="round"><path d="M1 4 V1 H5 M13 1 H17 V4 M17 10 V13 H13 M5 13 H1 V10"/><path d="M4.5 5.5 H13.5 M4 7.5 H14 M4.5 9.5 H13.5"/></g></svg>
<svg style="left:19px;top:272px" width="18" height="18"><g fill="none" stroke="#1d4a6e" stroke-width="1.3" stroke-linecap="round" stroke-linejoin="round"><circle cx="7" cy="4.5" r="3.5"/><path d="M1 16.5 Q1 10 7 10 Q8.5 10 9.5 10.5"/><path d="M1 16.5 H9"/><circle cx="12.3" cy="12.8" r="3.2"/><path d="M14.6 15.1 L17 17.2"/></g></svg>
<svg style="left:19.5px;top:314px" width="17" height="17"><g fill="none" stroke="#1d4a6e" stroke-width="1.3" stroke-linecap="round" stroke-linejoin="round"><path d="M9.5 1 H2 Q1 1 1 2 V14.5 Q1 15.5 2 15.5 H11"/><path d="M9.5 1 L12.5 4 V6"/><path d="M3.5 5.5 H9 M3.5 8.5 H9 M3.5 11.5 H8"/><path d="M11.5 13.5 L15.8 9 L16.6 9.8 L12.3 14.3 L11 14.8 Z"/></g></svg>
<svg style="left:18.5px;top:353.5px" width="18" height="18"><g fill="none" stroke="#1d4a6e" stroke-width="1.3" stroke-linecap="round" stroke-linejoin="round"><path d="M8 3.5 Q3 3.5 3 8.5 Q3 11 5 12.5 V15 H9.5"/><path d="M8 3.5 Q12.5 3.5 13 8"/><path d="M5.8 8.5 L7.3 10 L10 7"/><path d="M8 0.5 V1.5 M2 2.5 L2.8 3.3 M14 2.5 L13.2 3.3 M0.5 8.5 H1.5"/><path d="M16.90 13.80 L16.78 14.73 L15.54 15.10 L15.13 15.63 L15.10 16.92 L14.23 17.28 L13.30 16.39 L12.63 16.30 L11.50 16.92 L10.75 16.35 L11.06 15.10 L10.80 14.47 L9.70 13.80 L9.82 12.87 L11.06 12.50 L11.47 11.97 L11.50 10.68 L12.37 10.32 L13.30 11.21 L13.97 11.30 L15.10 10.68 L15.85 11.25 L15.54 12.50 L15.80 13.13Z" fill="#fff" stroke-width="1"/><circle cx="13.3" cy="13.8" r="1.08" stroke-width="0.9"/></g></svg>
<svg style="left:19px;top:393px" width="17" height="14"><g fill="none" stroke="#1d4a6e" stroke-width="1.3" stroke-linecap="round" stroke-linejoin="round"><rect x="1" y="1" width="15" height="10.5" rx="1.2"/><path d="M3.5 4.5 H7.5 M3.5 6.5 H7.5 M3.5 8.5 H7.5"/><path d="M14.30 6.20 L14.20 6.92 L13.25 7.21 L12.93 7.63 L12.90 8.62 L12.22 8.90 L11.50 8.22 L10.98 8.15 L10.10 8.62 L9.52 8.18 L9.75 7.21 L9.55 6.72 L8.70 6.20 L8.80 5.48 L9.75 5.19 L10.07 4.77 L10.10 3.78 L10.78 3.50 L11.50 4.18 L12.02 4.25 L12.90 3.78 L13.48 4.22 L13.25 5.19 L13.45 5.68Z" fill="#fff" stroke-width="1"/><circle cx="11.5" cy="6.2" r="0.84" stroke-width="0.9"/><path d="M4 13 H13"/></g></svg>
<svg style="left:18.5px;top:428.5px" width="18" height="19"><g fill="none" stroke="#1d4a6e" stroke-width="1.3" stroke-linecap="round" stroke-linejoin="round"><circle cx="7" cy="4.3" r="3.4"/><path d="M1 17.5 V15 Q1 10.5 7 10.5 Q8 10.5 9 10.8"/><path d="M1 17.5 H9"/><path d="M17.10 13.80 L16.97 14.78 L15.67 15.17 L15.23 15.73 L15.20 17.09 L14.28 17.47 L13.30 16.54 L12.59 16.44 L11.40 17.09 L10.61 16.49 L10.93 15.17 L10.66 14.51 L9.50 13.80 L9.63 12.82 L10.93 12.43 L11.37 11.87 L11.40 10.51 L12.32 10.13 L13.30 11.06 L14.01 11.16 L15.20 10.51 L15.99 11.11 L15.67 12.43 L15.94 13.09Z" fill="#fff" stroke-width="1"/><circle cx="13.3" cy="13.8" r="1.14" stroke-width="0.9"/></g></svg>
<svg style="left:19.5px;top:468.5px" width="18" height="16"><g fill="none" stroke="#1d4a6e" stroke-width="1.3" stroke-linecap="round" stroke-linejoin="round"><path d="M12 13.5 H2 Q1 13.5 1 12.5 V2 Q1 1 2 1 H13.5 Q14.5 1 14.5 2 V9"/><path d="M1 4 H14.5"/><path d="M6 7 L4.3 8.8 L6 10.5 M9.5 7 L11.2 8.8 L9.5 10.5 M8.3 6.5 L7.2 11"/><path d="M17.50 13.30 L17.39 14.13 L16.30 14.45 L15.93 14.93 L15.90 16.07 L15.13 16.39 L14.30 15.60 L13.70 15.53 L12.70 16.07 L12.04 15.56 L12.30 14.45 L12.07 13.90 L11.10 13.30 L11.21 12.47 L12.30 12.15 L12.67 11.67 L12.70 10.53 L13.47 10.21 L14.30 11.00 L14.90 11.07 L15.90 10.53 L16.56 11.04 L16.30 12.15 L16.53 12.70Z" fill="#fff" stroke-width="1"/><circle cx="14.3" cy="13.3" r="0.96" stroke-width="0.9"/></g></svg>
<svg style="left:18px;top:508px" width="18" height="15"><g fill="none" stroke="#1d4a6e" stroke-width="1.3" stroke-linecap="round" stroke-linejoin="round"><path d="M3.2 5 A6 6 0 1 1 9 13.5"/><path d="M1 3 L3 6 L6 4.5"/><path d="M9.5 4 V8 L12 9.5"/></g></svg>
<svg style="left:19.5px;top:543.5px" width="17" height="18"><g fill="none" stroke="#1d4a6e" stroke-width="1.3" stroke-linecap="round" stroke-linejoin="round"><path d="M8.2 1 A7.2 7.2 0 1 1 4.5 14.5 L1.5 16.5 L2.2 12.5 A7.2 7.2 0 0 1 8.2 1 Z"/><path d="M8.2 7.5 V12" stroke-width="1.8"/><circle cx="8.2" cy="4.8" r="0.6" stroke-width="1.4"/></g></svg>
<svg style="left:19.5px;top:584px" width="17" height="15"><g fill="none" stroke="#1d4a6e" stroke-width="1.3" stroke-linecap="round" stroke-linejoin="round"><path d="M3 3 V2 Q3 1 4 1 H15 Q16 1 16 2 V10 Q16 11 15 11 H14"/><path d="M1 4 Q1 3 2 3 H13 Q14 3 14 4 V12 Q14 13 13 13 H8 L6.5 14.5 L5 13 H2 Q1 13 1 12 Z"/><path d="M4.8 8 L6.8 10 L10.5 6.3"/></g></svg>
</body></html>
